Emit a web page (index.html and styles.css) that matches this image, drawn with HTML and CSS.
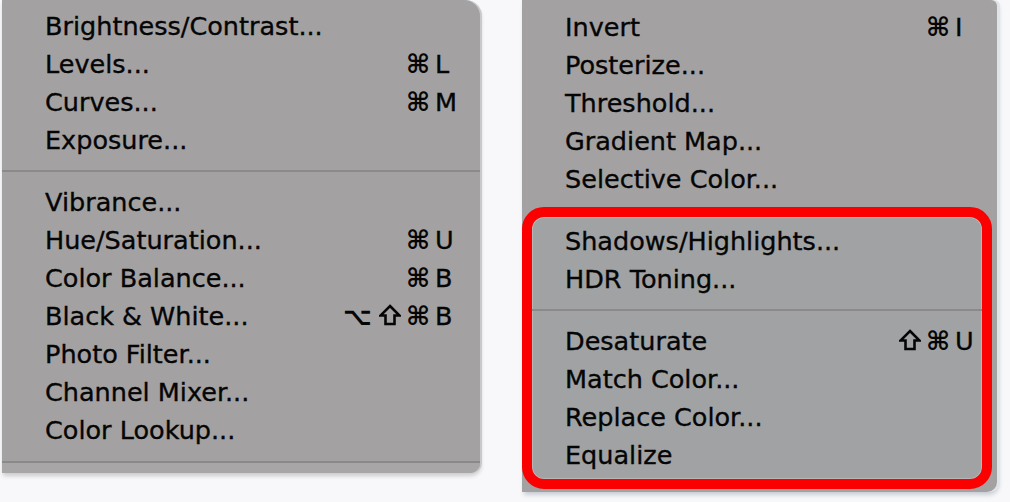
FILE: index.html
```html
<!DOCTYPE html>
<html>
<head>
<meta charset="utf-8">
<link rel="stylesheet" href="styles.css">
</head>
<body>
<div class="stage">
  <div class="menu menu-left">
    <div class="item"><span class="label">Brightness/Contrast...</span></div>
    <div class="item"><span class="label">Levels...</span><span class="mods"><span class="cmd">⌘</span></span><span class="key">L</span></div>
    <div class="item"><span class="label">Curves...</span><span class="mods"><span class="cmd">⌘</span></span><span class="key">M</span></div>
    <div class="item"><span class="label">Exposure...</span></div>
    <div class="sep"></div>
    <div class="item"><span class="label">Vibrance...</span></div>
    <div class="item"><span class="label">Hue/Saturation...</span><span class="mods"><span class="cmd">⌘</span></span><span class="key">U</span></div>
    <div class="item"><span class="label">Color Balance...</span><span class="mods"><span class="cmd">⌘</span></span><span class="key">B</span></div>
    <div class="item"><span class="label">Black &amp; White...</span><span class="mods"><span class="opt">⌥</span><svg class="shift" viewBox="0 0 22 22"><path d="M11 2 L20.5 11.5 H15.5 V20 H6.5 V11.5 H1.5 Z"/></svg><span class="cmd">⌘</span></span><span class="key">B</span></div>
    <div class="item"><span class="label">Photo Filter...</span></div>
    <div class="item"><span class="label">Channel Mixer...</span></div>
    <div class="item"><span class="label">Color Lookup...</span></div>
    <div class="foot"></div>
  </div>
  <div class="menu menu-right">
    <div class="item"><span class="label">Invert</span><span class="mods"><span class="cmd">⌘</span></span><span class="key">I</span></div>
    <div class="item"><span class="label">Posterize...</span></div>
    <div class="item"><span class="label">Threshold...</span></div>
    <div class="item"><span class="label">Gradient Map...</span></div>
    <div class="item"><span class="label">Selective Color...</span></div>
    <div class="highlight">
      <div class="item"><span class="label">Shadows/Highlights...</span></div>
      <div class="item"><span class="label">HDR Toning...</span></div>
      <div class="sep"></div>
      <div class="item"><span class="label">Desaturate</span><span class="mods"><svg class="shift" viewBox="0 0 22 22"><path d="M11 2 L20.5 11.5 H15.5 V20 H6.5 V11.5 H1.5 Z"/></svg><span class="cmd">⌘</span></span><span class="key">U</span></div>
      <div class="item"><span class="label">Match Color...</span></div>
      <div class="item"><span class="label">Replace Color...</span></div>
      <div class="item"><span class="label">Equalize</span></div>
    </div>
  </div>
</div>
</body>
</html>
```

FILE: styles.css
```css
html, body {
  margin: 0;
  padding: 0;
  background: #f8f8fa;
  width: 1010px;
  height: 502px;
  overflow: hidden;
}

.stage {
  display: flex;
  align-items: flex-start;
  gap: 42px;
  padding-left: 2px;
  font-family: "DejaVu Sans", sans-serif;
  font-size: 25.5px;
  color: #050505;
  -webkit-text-stroke: 0.35px #050505;
}

.menu {
  background: #a3a1a1;
  display: flex;
  flex-direction: column;
}

.menu-left {
  width: 478px;
  padding-top: 7px;
  border-radius: 0 16px 10px 0;
  box-shadow: 2px 0 0 #c9c8ca, 1px 3px 4px rgba(0,0,0,0.18);
}

.menu-right {
  width: 475px;
  padding-top: 8px;
  padding-bottom: 3px;
  border-radius: 0 6px 10px 0;
  box-shadow: 3px 0 0 #dfe4e8, 2px 3px 4px rgba(60,80,100,0.25);
}

.item {
  height: 38px;
  display: flex;
  align-items: center;
  padding-left: 43px;
  padding-right: 22px;
  white-space: nowrap;
}

.menu-right .item {
  padding-right: 19px;
}

.label {
  flex: 1;
}

.mods {
  display: flex;
  align-items: center;
  gap: 5px;
  -webkit-text-stroke: 0;
}

.cmd {
  font-size: 26px;
  font-weight: bold;
}

.opt {
  font-size: 25px;
  font-weight: bold;
  margin-right: 2px;
}

.shift {
  width: 22px;
  height: 22px;
  margin-top: -2px;
}

.shift path {
  fill: none;
  stroke: #050505;
  stroke-width: 2.6;
  stroke-linejoin: miter;
}

.key {
  width: 28px;
  padding-left: 5px;
  box-sizing: border-box;
}

.sep {
  height: 24px;
  display: flex;
  align-items: center;
}

.sep::before {
  content: "";
  display: block;
  width: 100%;
  height: 2px;
  background: #8b8989;
}

.foot {
  margin-top: 12px;
  height: 10px;
  border-top: 2px solid #8b8989;
  background: #a8a6a6;
  border-radius: 0 0 10px 0;
}

.highlight {
  margin: 9px 5px 0 0;
  border: 10px solid #fb0000;
  border-radius: 22px;
  padding: 5px 0;
  background: #a0a2a4;
  box-shadow: inset 0 0 0 1px #b9b6b6;
}

.menu-right .highlight .item {
  padding-left: 33px;
  padding-right: 4px;
}
```
